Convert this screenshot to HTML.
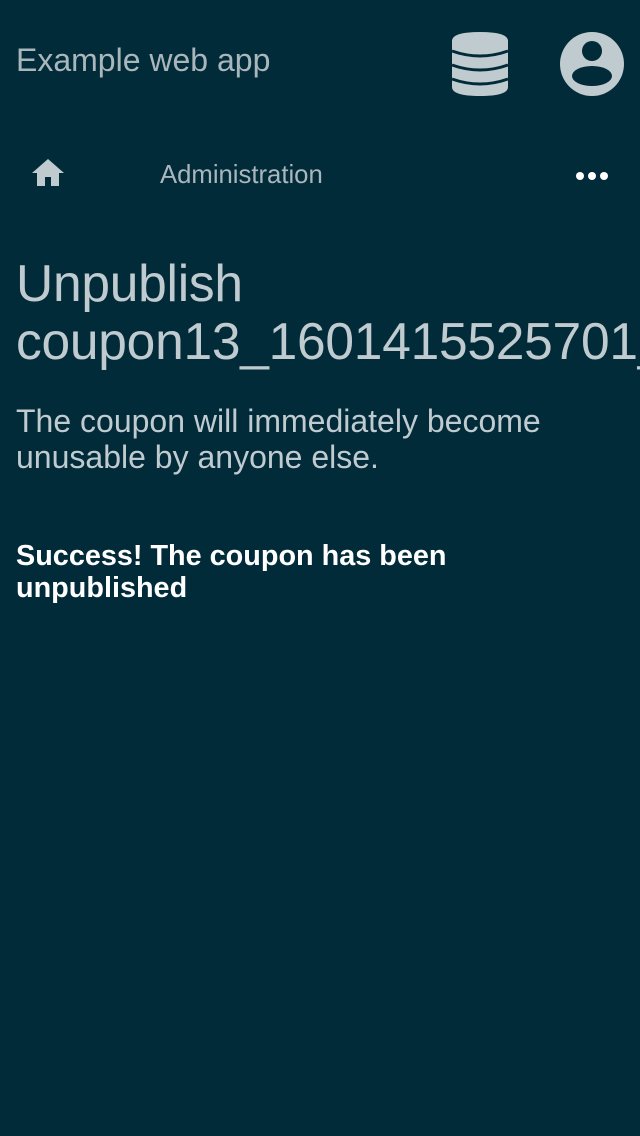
<!DOCTYPE html>
<html><head><meta charset="utf-8"><style>
html,body{margin:0;padding:0;background:#022b3a;width:640px;height:1136px;overflow:hidden;font-family:"Liberation Sans",sans-serif;color:#c0cbd0}
.a{position:absolute;white-space:nowrap}
.clip{position:absolute;left:0;top:0;width:640px;height:1136px;overflow:hidden}
</style></head><body><div class="clip">
<div class="a" style="left:16px;top:42px;font-size:32px;color:#a9b6bc">Example web app</div>
<svg class="a" style="left:450px;top:31px" width="60" height="66" viewBox="0 0 60 66">
<g fill="#c0cbd0">
<path d="M2 10 Q2 1 30 1 Q58 1 58 10 V56 Q58 65 30 65 Q2 65 2 56Z"/>
</g>
<g fill="none" stroke="#022b3a" stroke-width="3">
<path d="M2 20 Q30 30 58 20"/>
<path d="M2 34 Q30 44 58 34"/>
<path d="M2 48 Q30 58 58 48"/>
</g></svg>
<svg class="a" style="left:560px;top:32px" width="64" height="64" viewBox="0 0 64 64">
<circle cx="32" cy="32" r="32" fill="#c0cbd0"/>
<circle cx="32" cy="19" r="10" fill="#022b3a"/>
<ellipse cx="32" cy="44" rx="20" ry="10" fill="#022b3a"/>
</svg>
<svg class="a" style="left:31px;top:158px" width="34" height="30" viewBox="0 0 34 30">
<path d="M17 1 L1 15 H6 V28 H14 V19 H20 V28 H28 V15 H33Z" fill="#c0cbd0"/>
</svg>
<div class="a" style="left:160px;top:161px;font-size:25.7px;color:#a9b6bc">Administration</div>
<svg class="a" style="left:574px;top:169px" width="36" height="14"><g fill="#fff"><circle cx="6" cy="7" r="4"/><circle cx="18" cy="7" r="4"/><circle cx="30" cy="7" r="4"/></g></svg>
<div class="a" style="left:16px;top:254px;font-size:51.5px;line-height:58px;letter-spacing:-0.25px">Unpublish<br>coupon13_1601415525701_</div>
<div class="a" style="left:16px;top:403px;font-size:32px;line-height:36px">The coupon will immediately become<br>unusable by anyone else.</div>
<div class="a" style="left:16px;top:540px;font-size:28.8px;line-height:32px;font-weight:bold;color:#fff">Success! The coupon has been<br>unpublished</div>
</div></body></html>
